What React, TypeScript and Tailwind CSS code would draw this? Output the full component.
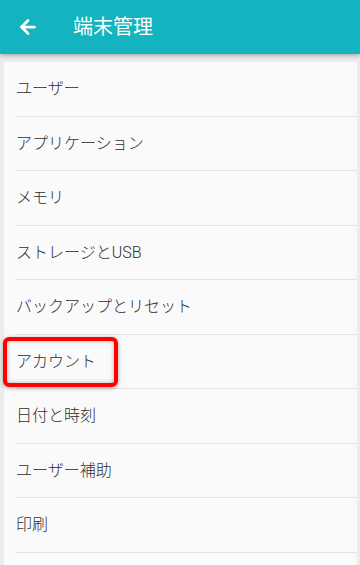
import { ArrowLeft } from "lucide-react";

const items = [
  "ユーザー",
  "アプリケーション",
  "メモリ",
  "ストレージとUSB",
  "バックアップとリセット",
  "アカウント",
  "日付と時刻",
  "ユーザー補助",
  "印刷",
];

export default function App() {
  return (
    <div
      className="flex h-[565px] w-[360px] flex-col overflow-hidden bg-[#ececec]"
      style={{ fontFamily: '"Roboto", "Noto Sans CJK JP", sans-serif' }}
    >
      <header className="relative z-10 flex h-[54px] shrink-0 items-center bg-[#13b4bf] shadow-[0_2px_4px_rgba(0,0,0,0.25)]">
        <ArrowLeft className="ml-[17px] h-[22px] w-[22px] text-white" strokeWidth={3} />
        <h1 className="ml-[34px] text-[20px] text-white">端末管理</h1>
      </header>
      <div className="ml-[4px] mr-[3px] mt-[8px] flex-1 bg-[#fafafa]">
        {items.map((label) => (
          <div key={label} className="relative h-[54.5px]">
            <div className="flex h-full items-center pl-[12px] text-[16px] font-light text-[#2e2e2e]">
              {label}
            </div>
            <div className="absolute bottom-0 left-[12px] right-0 h-px bg-[#e2e2e2]" />
            {label === "アカウント" && (
              <div className="absolute left-[-1px] top-[2px] h-[50px] w-[115px] rounded-[6px] border-[4px] border-[#ff0000] shadow-[0_1px_4px_rgba(0,0,0,0.35),inset_0_0_4px_rgba(0,0,0,0.3)]" />
            )}
          </div>
        ))}
      </div>
    </div>
  );
}
